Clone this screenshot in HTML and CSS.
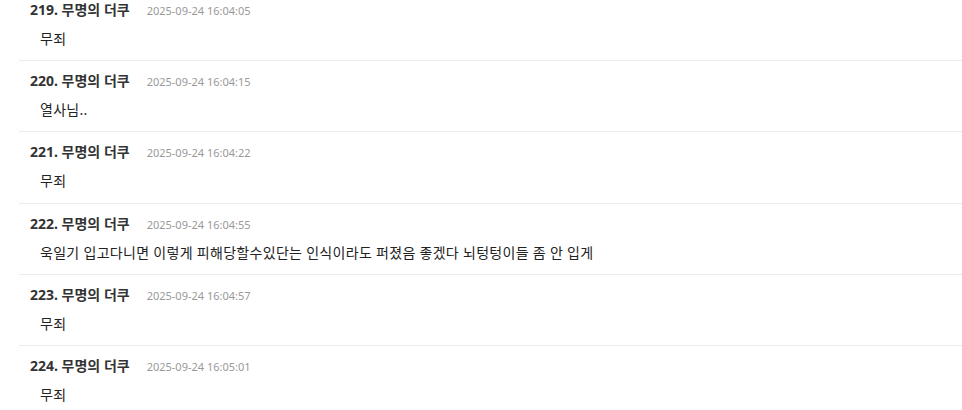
FILE: index.html
```html
<!DOCTYPE html>
<html lang="ko">
<head>
<meta charset="utf-8">
<title>댓글</title>
<link rel="stylesheet" href="styles.css">
</head>
<body>
<ul class="comments">
  <li class="comment">
    <div class="meta"><span class="name">219. 무명의 더쿠</span><span class="time">2025-09-24 16:04:05</span></div>
    <div class="text">무죄</div>
  </li>
  <li class="comment">
    <div class="meta"><span class="name">220. 무명의 더쿠</span><span class="time">2025-09-24 16:04:15</span></div>
    <div class="text">열사님..</div>
  </li>
  <li class="comment">
    <div class="meta"><span class="name">221. 무명의 더쿠</span><span class="time">2025-09-24 16:04:22</span></div>
    <div class="text">무죄</div>
  </li>
  <li class="comment">
    <div class="meta"><span class="name">222. 무명의 더쿠</span><span class="time">2025-09-24 16:04:55</span></div>
    <div class="text">욱일기 입고다니면 이렇게 피해당할수있단는 인식이라도 퍼졌음 좋겠다 뇌텅텅이들 좀 안 입게</div>
  </li>
  <li class="comment">
    <div class="meta"><span class="name">223. 무명의 더쿠</span><span class="time">2025-09-24 16:04:57</span></div>
    <div class="text">무죄</div>
  </li>
  <li class="comment">
    <div class="meta"><span class="name">224. 무명의 더쿠</span><span class="time">2025-09-24 16:05:01</span></div>
    <div class="text">무죄</div>
  </li>
</ul>
</body>
</html>
```
FILE: styles.css
```css
html, body {
  margin: 0;
  padding: 0;
  background: #fff;
  overflow: hidden;
}
body {
  font-family: "Noto Sans", "Noto Sans CJK KR", sans-serif;
  color: #333;
}
.comments {
  list-style: none;
  margin: -10.25px 0 0 19px;
  padding: 0;
}
.comment {
  border-bottom: 1px solid #ebebeb;
  padding: 10px 0 11px 11px;
}
.meta {
  display: flex;
  align-items: baseline;
  line-height: 20px;
}
.name {
  font-size: 14px;
  font-weight: 700;
  color: #333;
}
.time {
  margin-left: 17px;
  font-size: 11px;
  color: #999;
}
.text {
  margin-top: 8px;
  padding-left: 10px;
  font-size: 14px;
  line-height: 20.25px;
  letter-spacing: 0.3px;
  color: #222;
}
```
